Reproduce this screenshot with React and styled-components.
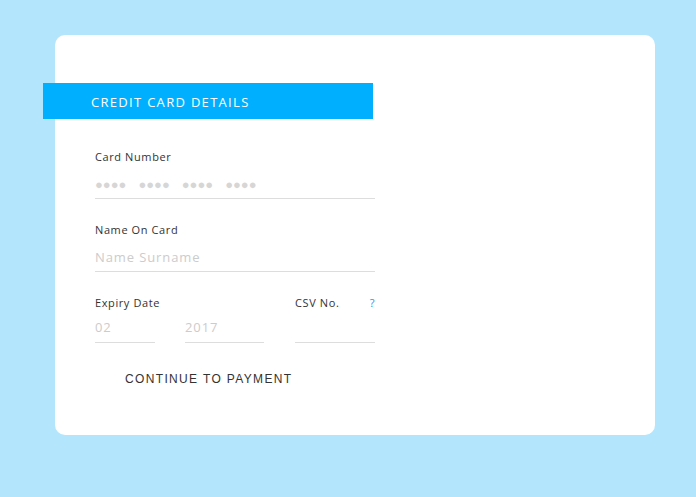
import React from "react";
import styled, { createGlobalStyle } from "styled-components";

const Global = createGlobalStyle`
  html, body { margin: 0; padding: 0; }
  body {
    background: #b3e5fc;
    font-family: "Open Sans", "Liberation Sans", sans-serif;
    width: 696px;
    height: 497px;
    overflow: hidden;
  }
`;

const Page = styled.div`
  padding: 35px 0 0 55px;
`;

const Card = styled.div`
  width: 600px;
  height: 400px;
  background: #fff;
  border-radius: 10px;
  padding-top: 48px;
  box-sizing: border-box;
`;

const Banner = styled.div`
  margin-left: -12px;
  width: 330px;
  height: 36px;
  background: #00b0ff;
  color: #fff;
  display: flex;
  align-items: center;
  padding-left: 48px;
  padding-top: 1px;
  box-sizing: border-box;
  font-size: 13px;
  letter-spacing: 1.3px;
`;

const Form = styled.div`
  margin-left: 40px;
  width: 280px;
  padding-top: 30px;
  display: flex;
  flex-direction: column;
  gap: 23px;
`;

const Field = styled.div`
  display: flex;
  flex-direction: column;
  width: ${(p) => p.$w || "100%"};
  margin-left: ${(p) => p.$ml || "0"};
`;

const LabelRow = styled.div`
  display: flex;
  justify-content: space-between;
  font-size: 11px;
  line-height: 16px;
  color: #333;
  letter-spacing: 0.6px;
  white-space: nowrap;
`;

const Help = styled.span`
  color: #2196f3;
  font-size: 11px;
`;

const Input = styled.div`
  height: ${(p) => p.$h || "34px"};
  border-bottom: 1px solid #ddd;
  display: flex;
  align-items: center;
  font-size: 13px;
  color: #ccc;
  padding-top: ${(p) => p.$pt || "5px"};
  box-sizing: border-box;
  letter-spacing: 0.9px;
  white-space: pre;
`;

const Dots = styled.span`
  font-size: 13px;
  color: #d6d6d6;
  letter-spacing: 0;
  word-spacing: 8.6px;
`;

const Row = styled.div`
  display: flex;
  align-items: flex-end;
`;

const Button = styled.div`
  margin-top: 6px;
  padding-left: 30px;
  font-family: "Liberation Sans", Arial, sans-serif;
  font-size: 12px;
  letter-spacing: 1.35px;
  color: #333;
`;

export default function App() {
  return (
    <Page>
      <Global />
      <Card>
        <Banner>CREDIT CARD DETAILS</Banner>
        <Form>
          <Field>
            <LabelRow>Card Number</LabelRow>
            <Input>
              <Dots>●●●● ●●●● ●●●● ●●●●</Dots>
            </Input>
          </Field>
          <Field>
            <LabelRow>Name On Card</LabelRow>
            <Input>Name Surname</Input>
          </Field>
          <Row>
            <Field $w="60px">
              <LabelRow>Expiry Date</LabelRow>
              <Input $h="32px" $pt="0">02</Input>
            </Field>
            <Field $w="79px" $ml="30px">
              <LabelRow>&nbsp;</LabelRow>
              <Input $h="32px" $pt="0">2017</Input>
            </Field>
            <Field $w="80px" $ml="31px">
              <LabelRow>
                <span>CSV No.</span>
                <Help>?</Help>
              </LabelRow>
              <Input $h="32px" $pt="0"></Input>
            </Field>
          </Row>
          <Button>CONTINUE TO PAYMENT</Button>
        </Form>
      </Card>
    </Page>
  );
}
